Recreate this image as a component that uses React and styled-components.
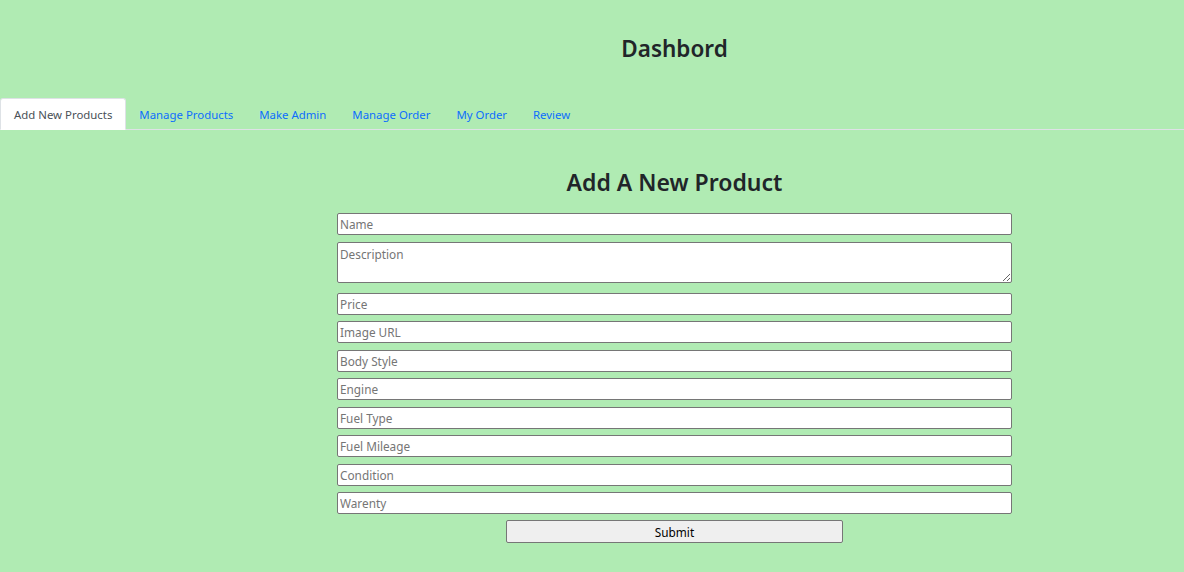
import React from 'react'
import styled, { createGlobalStyle } from 'styled-components'

const GlobalStyle = createGlobalStyle`
    body {
        margin: 0;
        background: #b0ebb3;
        font-family: "Noto Sans", "Open Sans", sans-serif;
        color: #212529;
    }
`

const Page = styled.div`
    min-height: 572px;
    background: #b0ebb3;
`

const Header = styled.h2`
    margin: 0;
    padding: 33px 0 0 165px;
    height: 65px;
    box-sizing: border-box;
    text-align: center;
    font-size: 22.5px;
    font-weight: 600;
`

const Tabs = styled.ul`
    display: flex;
    list-style: none;
    margin: 0;
    padding: 0;
    border-bottom: 1px solid #dee2e6;
    margin-top: 33px;
`

const Tab = styled.li`
    margin-bottom: -1px;
`

const TabLink = styled.a`
    display: block;
    height: 32px;
    box-sizing: border-box;
    padding: 0 ${p => (p.active ? '13px' : '12px')};
    line-height: 31px;
    font-size: 11.4px;
    text-decoration: none;
    cursor: pointer;
    color: ${p => (p.active ? '#495057' : '#0d6efd')};
    background: ${p => (p.active ? '#fff' : 'transparent')};
    border: 1px solid ${p => (p.active ? '#dee2e6' : 'transparent')};
    border-bottom-color: ${p => (p.active ? '#fff' : 'transparent')};
    border-radius: 3px 3px 0 0;
`

const Content = styled.div`
    display: flex;
    flex-direction: column;
    align-items: center;
    padding: 0 172px 0 337px;
`

const Title = styled.h2`
    margin: 37px 0 16px;
    font-size: 23px;
    font-weight: 600;
    line-height: 30px;
`

const Form = styled.form`
    width: 675px;
    display: flex;
    flex-direction: column;
    align-items: center;
`

const Field = styled.input`
    width: 100%;
    height: 22px;
    box-sizing: border-box;
    margin-bottom: 6.5px;
    padding: 1px 2px;
    border: 1px solid #767676;
    border-radius: 2px;
    background: #fff;
    font-family: inherit;
    font-size: 11.8px;
    &::placeholder {
        color: #757575;
    }
`

const Area = styled.textarea`
    width: 100%;
    height: 41px;
    box-sizing: border-box;
    margin-bottom: 10px;
    padding: 3px 2px;
    border: 1px solid #767676;
    border-radius: 2px;
    background: #fff;
    font-family: inherit;
    font-size: 11.8px;
    display: block;
    &::placeholder {
        color: #757575;
    }
`

const Submit = styled.button`
    width: 337px;
    height: 23px;
    margin-top: -0.5px;
    border: 1px solid #767676;
    border-radius: 2px;
    background: #efefef;
    font-family: inherit;
    font-size: 11.8px;
    color: #000;
`

const tabs = ['Add New Products', 'Manage Products', 'Make Admin', 'Manage Order', 'My Order', 'Review']

const fields = ['Price', 'Image URL', 'Body Style', 'Engine', 'Fuel Type', 'Fuel Mileage', 'Condition', 'Warenty']

function App() {
    return (
        <Page>
            <GlobalStyle />
            <Header>Dashbord</Header>
            <Tabs>
                {tabs.map((t, i) => (
                    <Tab key={t}>
                        <TabLink active={i === 0}>{t}</TabLink>
                    </Tab>
                ))}
            </Tabs>
            <Content>
                <Title>Add A New Product</Title>
                <Form onSubmit={e => e.preventDefault()}>
                    <Field placeholder="Name" />
                    <Area placeholder="Description" />
                    {fields.map(f => (
                        <Field key={f} placeholder={f} />
                    ))}
                    <Submit type="submit">Submit</Submit>
                </Form>
            </Content>
        </Page>
    )
}

export default App
